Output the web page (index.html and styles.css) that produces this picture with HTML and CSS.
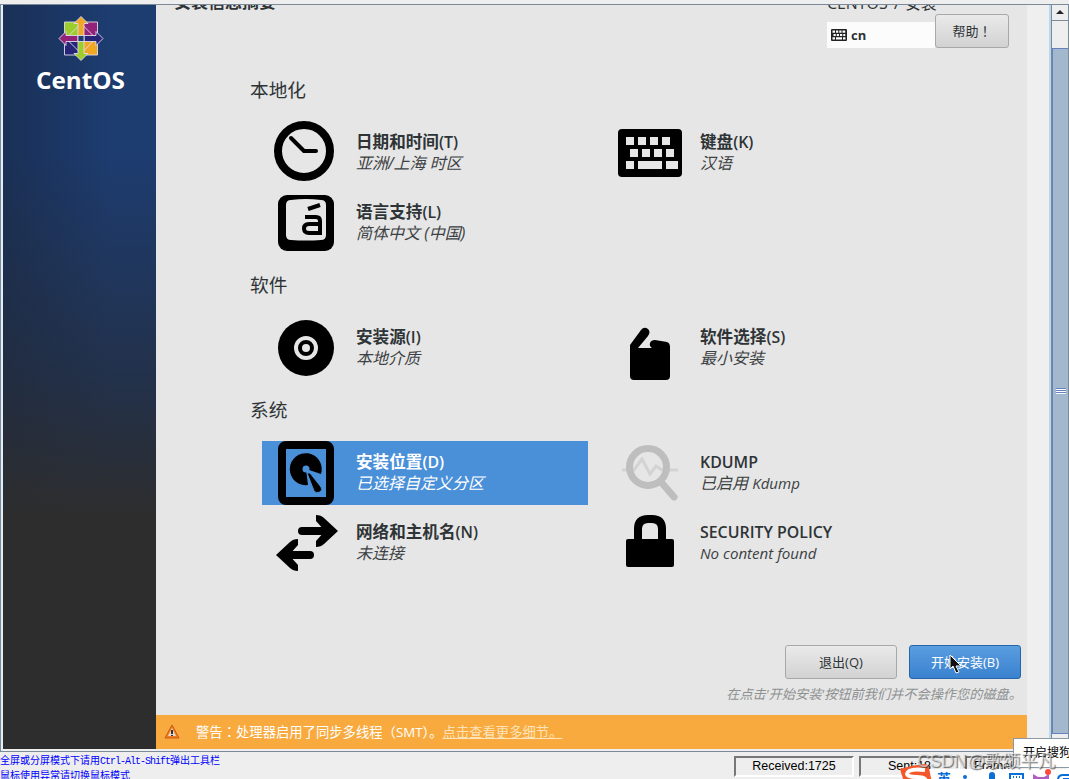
FILE: index.html
```html
<!DOCTYPE html>
<html lang="zh-CN">
  <head>
    <meta charset="UTF-8" />
    <meta name="viewport" content="width=device-width, initial-scale=1.0" />
    <title>CENTOS 7 安装</title>
    <link rel="stylesheet" href="styles.css">
  </head>
  <body>
    <div class="console">
      <div class="sidebar">
        <svg class="logo" width="100" height="84" viewBox="0 0 100 84">
          <g stroke="#e0dcea" stroke-width="0.9" transform="translate(22.5 0)">
            <path fill="#9ccd2a" d="M11 11h16v16H11z" />
            <path fill="#932279" d="M28 11h16v16H28z" />
            <path fill="#262577" d="M11 28h16v16H11z" />
            <path fill="#efa724" d="M28 28h16v16H28z" />
            <g transform="translate(27.5 27.5)">
              <path fill="none" d="M0-15L15 0L0 15L-15 0z" />
              <path fill="#efa724" d="M0-22l7 7h-4v12h-6v-12h-4z" />
              <path fill="#262577" d="M22 0l-7 7v-4H3v-6h12v-4z" />
              <path fill="#9ccd2a" d="M0 22l-7-7h4V3h6v12h4z" />
              <path fill="#932279" d="M-22 0l7-7v4h12v6h-12v4z" />
              <path fill="#1d3b6d" d="M-3-3h6v6h-6z" />
            </g>
          </g>
          <text x="5" y="78" textLength="89" lengthAdjust="spacingAndGlyphs">CentOS</text>
        </svg>
      </div>

      <div class="main">
        <div class="header">
          <div class="title">安装信息摘要</div>
          <div class="lang">
            <div class="product">CENTOS 7 安装</div>
            <div class="layout">
              <svg width="16" height="12" viewBox="0 0 64 48">
                <rect width="64" height="48" rx="4" fill="#222" />
                <path fill="#fcfcfc" d="M6 6h10v9H6zM20 6h9v9h-9zM33 6h9v9h-9zM46 6h11v9H46zM10 20h9v8h-9zM23 20h9v8h-9zM36 20h9v8h-9zM49 20h8v8h-8zM6 33h10v9H6zM20 33h24v9H20zM48 33h10v9H48z" />
              </svg>
              cn
            </div>
          </div>
          <div class="btn help">帮助<span class="mid" lang="zh-TW">！</span></div>
        </div>

        <div class="hub">
          <h2>本地化</h2>
          <div class="grid">
            <div class="spoke">
              <svg width="64" height="64">
                <circle cx="30" cy="30" r="26" fill="none" stroke="#000" stroke-width="8" />
                <path d="M17 17l13 13h12" fill="none" stroke="#000" stroke-width="4" stroke-linecap="round" stroke-linejoin="round" />
              </svg>
              <div class="text"><b>日期和时间<span>(T)</span></b><i>亚洲/上海 时区</i></div>
            </div>
            <div class="spoke">
              <svg width="64" height="64">
                <rect y="8" width="64" height="48" rx="4" />
                <path fill="#e6e6e6" d="M8 16h8v8H8zM20 16h8v8h-8zM32 16h8v8h-8zM44 16h8v8h-8zM12 28h8v8h-8zM24 28h8v8h-8zM36 28h8v8h-8zM48 28h8v8h-8zM8 40h8v8H8zM20 40h24v8H20zM48 40h12v8H48z" />
              </svg>
              <div class="text"><b>键盘<span>(K)</span></b><i>汉语</i></div>
            </div>
            <div class="spoke">
              <svg width="64" height="64">
                <rect x="4" y="4" width="56" height="56" rx="9" />
                <path fill="#e6e6e6" d="M17 9q15-2 30 0q5 0 5 5v30q0 5-5 5q-15 1-30 0q-5 0-5-5V14q0-5 5-5z" />
                <path d="M34 18l12-4" fill="none" stroke="#000" stroke-width="4" />
                <path d="M31 26h11q4 0 4 4v12H35q-5 0-5-4.500t5-4.500h11" fill="none" stroke="#000" stroke-width="4" />
              </svg>
              <div class="text"><b>语言支持<span>(L)</span></b><i>简体中文 (中国)</i></div>
            </div>
          </div>

          <h2>软件</h2>
          <div class="grid">
            <div class="spoke">
              <svg width="64" height="64">
                <circle cx="32" cy="32" r="28" />
                <circle cx="32" cy="32" r="10" fill="none" stroke="#e6e6e6" stroke-width="4" />
                <circle cx="32" cy="32" r="4" fill="#e6e6e6" />
              </svg>
              <div class="text"><b>安装源<span>(I)</span></b><i>本地介质</i></div>
            </div>
            <div class="spoke">
              <svg width="64" height="64">
                <path d="M12 29L23 14q3-4 7-1q3 3 0 7L20 32h14q-3-2-2-5q1-3 5-3l12 2q3 1 3 5v29q0 4-4 4H16q-4 0-4-4z" />
              </svg>
              <div class="text"><b>软件选择<span>(S)</span></b><i>最小安装</i></div>
            </div>
          </div>

          <h2>系统</h2>
          <div class="grid">
            <div class="spoke selected">
              <svg width="64" height="64">
                <rect x="8" y="4" width="48" height="56" rx="4" fill="none" stroke="#000" stroke-width="8" />
                <path d="M32 28l2 16A16 16 0 1 1 47 33z" />
                <circle cx="32" cy="28" r="3.500" fill="#4a90d9" />
                <path d="M33 32l3 0 11 14q2 3-1 5q-4 2-6-1z" stroke="#4a90d9" />
              </svg>
              <div class="text"><b>安装位置<span>(D)</span></b><i>已选择自定义分区</i></div>
            </div>
            <div class="spoke">
              <svg width="64" height="64">
                <path d="M4 29h12l8-11 8 15 6-8 6 4h16" fill="none" stroke="#d3d3d3" stroke-width="3" />
                <circle cx="30" cy="26" r="18.500" fill="none" stroke="#bebebe" stroke-width="7" />
                <path d="M43 41l13 15" stroke="#bebebe" stroke-width="7" stroke-linecap="round" />
              </svg>
              <div class="text"><b class="latin">KDUMP</b><i>已启用 <span>Kdump</span></i></div>
            </div>
            <div class="spoke">
              <svg width="64" height="64">
                <path d="M28 20h26M36 44H10" stroke="#000" stroke-width="8" stroke-linecap="round" />
                <path d="M42 4q5 0 8 3l14 13-14 13q-3 3-8 3v-6l9-10-9-10z" />
                <path d="M24 28q-5 0-8 3L2 44l14 13q3 3 8 3v-6l-9-10 9-10z" />
              </svg>
              <div class="text"><b>网络和主机名<span>(N)</span></b><i>未连接</i></div>
            </div>
            <div class="spoke">
              <svg width="64" height="64">
                <path d="M20 32V18q0-10 10-10h4q10 0 10 10v14" fill="none" stroke="#000" stroke-width="8" />
                <rect x="8" y="28" width="48" height="28" rx="2" />
              </svg>
              <div class="text"><b class="latin">SECURITY POLICY</b><i><span>No content found</span></i></div>
            </div>
          </div>
        </div>

        <div class="actions">
          <div class="btn">退出(Q)</div>
          <div class="btn primary">开始安装(B)
            <svg class="cursor" width="14" height="20" viewBox="0 0 14 20"><path d="M1 1v14l3-3 3 7 3-1-3-6h5z" fill="#111" stroke="#fff" /></svg>
          </div>
        </div>
        <div class="hint">在点击'开始安装'按钮前我们并不会操作您的磁盘。</div>

        <div class="warning">
          <svg width="16" height="16">
            <path d="M8 1l7 13H1z" fill="#f27c24" stroke="#c75b12" stroke-linejoin="round" />
            <path d="M8 4l4 8H4z" fill="#e8d9c6" />
            <path d="M7 6h2v4H7zM7 11h2v1H7z" fill="#333" />
          </svg>
          <span>警告<span class="mid" lang="zh-TW">：</span>处理器启用了同步多线程（SMT）。<u>点击查看更多细节。</u></span>
        </div>
      </div>

      <div class="scrollbar">
        <div class="up"></div>
        <div class="track"></div>
        <div class="thumb"><div class="grip"></div></div>
        <div class="end"></div>
      </div>
    </div>

    <div class="status">
      <div class="tips">
        <div>全屏或分屏模式下请用<span>Ctrl-Alt-Shift</span>弹出工具栏</div>
        <div>鼠标使用异常请切换鼠标模式</div>
      </div>
      <div class="field">Received:1725</div>
      <div class="field sent">Sent:18</div>
      <div class="field frame">Frame!</div>
    </div>

    <div class="tooltip">开启搜狗</div>
    <div class="ime">
      <svg width="169" height="19">
        <path d="M29 5h140v14H29z" fill="#fff" />
        <path d="M0 5Q12 1 25 0q3 0 4 4l3 15H5Q2 13 0 5z" fill="#f4582a" />
        <path d="M25 6Q8 4 7 10q0 3 10 3t9 6" fill="none" stroke="#fff" stroke-width="4" />
        <g fill="#0b6fd8">
          <circle cx="65" cy="13" r="2" />
          <rect x="89" y="8" width="6" height="12" rx="3" />
        </g>
        <path d="M110 20V10h13v10M113 13h1M116 13h1M119 13h1M113 17h1M116 17h1M119 17h1" fill="none" stroke="#0b6fd8" stroke-width="2" />
        <path d="M133 10l5 3h6l5-3v9h-16z" fill="#b35cc6" />
        <circle cx="148" cy="8" r="3" fill="#fb4a3e" />
        <path d="M158 20v-4q0-5 5-5h6M164 20v-5h5" fill="none" stroke="#0b6fd8" stroke-width="2" />
      </svg>
      <span>英</span>
    </div>
    <div class="watermark">CSDN @歌颂平凡</div>
  </body>
</html>
```
FILE: styles.css
```css
* {
  box-sizing: border-box;
}

body {
  margin: 0;
  width: 1069px;
  height: 779px;
  padding-top: 4px;
  overflow: hidden;
  position: relative;
  background-color: #eee;
  font-family: "Open Sans", "Noto Sans CJK SC", sans-serif;
  color: #2e3436;
}

svg {
  display: block;
  flex: none;
}

.console {
  display: flex;
  height: 748px;
  border: 1px solid #7a8a99;
  border-right: 0;
  padding: 0 0 2px 2px;
  background: linear-gradient(#efefef, #efefef) no-repeat 2px 0, #e4eef7;
}

.sidebar {
  width: 153px;
  background: linear-gradient(rgba(45, 45, 45, 0) 20%, rgba(38, 42, 50, 0.6) 50%, #2d2d2d 69%),
    linear-gradient(90deg, #1a3056, #1d3c70 70%);
}

.logo {
  margin: 6px 0 0 28px;
}
.logo text {
  font-family: "Open Sans", sans-serif;
  font-weight: 700;
  font-size: 23px;
  fill: #fff;
}

.main {
  display: flex;
  flex-direction: column;
  width: 871px;
  background-color: #e6e6e6;
}

.header {
  display: flex;
  height: 55px;
  padding-left: 18px;
  overflow: hidden;
}
.title {
  width: 653px;
  margin-top: -15px;
  font-size: 17px;
  line-height: 24px;
  font-weight: 700;
}
.lang {
  width: 108px;
}
.product {
  margin-top: -14px;
  height: 31px;
  font-size: 15.9px;
  line-height: 25px;
  white-space: nowrap;
}
.layout {
  display: flex;
  align-items: center;
  gap: 4px;
  height: 26px;
  padding: 0 0 1px 4px;
  background-color: #fcfcfc;
  font-size: 13px;
  font-weight: 700;
}

.btn {
  width: 112px;
  height: 34px;
  border: 1px solid #a8a8a8;
  border-radius: 3px;
  background: linear-gradient(#eaeaea, #d2d2d2);
  font-size: 13px;
  line-height: 32px;
  text-align: center;
}
.help {
  width: 74px;
  margin-top: 9px;
}
/* centred full-width punctuation */
.mid {
  font-family: "Noto Sans CJK TC", sans-serif;
  line-height: 1;
}
.primary {
  position: relative;
  border-color: #2566ab;
  background: linear-gradient(#5a9de0, #3a82d0);
  color: #fff;
}
.cursor {
  position: absolute;
  left: 39px;
  top: 8px;
}

.hub {
  height: 585px;
  padding: 17px 0 0 94px;
}
h2 {
  margin: 0;
  height: 26px;
  font-size: 18.7px;
  line-height: 26px;
  font-weight: 400;
}
.grid {
  display: grid;
  grid-template-columns: 326px 326px;
  gap: 6px 18px;
  padding: 18px 0 17px 12px;
}
.spoke {
  display: flex;
  height: 64px;
  padding-left: 12px;
}
.text {
  margin: 11px 0 0 18px;
  white-space: nowrap;
}
.text b,
.text i {
  display: block;
  height: 21px;
  line-height: 21px;
}
.text b {
  font-size: 16.6px;
  line-height: 20px;
}
.text b span,
.text .latin {
  font-size: 15.9px;
  font-weight: 600;
}
.text i {
  font-size: 16px;
  color: #3c4143;
}
.text i span {
  font-size: 15.1px;
}
.selected {
  background-color: #4a90d9;
}
.selected b,
.selected i {
  color: #fff;
}

.actions {
  display: flex;
  justify-content: flex-end;
  gap: 12px;
  padding-right: 6px;
}
.hint {
  height: 36px;
  padding-right: 5px;
  font-size: 13.2px;
  line-height: 30px;
  font-style: italic;
  text-align: right;
  color: #8e9192;
}

.warning {
  display: flex;
  flex: 1;
  align-items: center;
  gap: 16px;
  padding: 0 0 1px 8px;
  background-color: #f9aa3e;
  color: #fff;
  font-size: 13.33px;
}
.warning u {
  color: #fde3ba;
}

.scrollbar {
  display: flex;
  flex-direction: column;
  width: 18px;
  height: 746px;
  margin-left: auto;
  border: solid #7a8a99;
  border-width: 0 1px;
  box-shadow: -2px 0 0 #b8d8ee;
  background-color: #eee;
}
.up {
  height: 16px;
  border-bottom: 1px solid #7a8a99;
}
.up::before {
  content: "";
  display: block;
  width: 0;
  margin: 5px auto 0;
  border: solid transparent;
  border-width: 0 4px 4px;
  border-bottom-color: #222;
}
.track {
  height: 27px;
}
.thumb {
  display: flex;
  align-items: center;
  justify-content: center;
  height: 686px;
  border: 1px solid #6382bf;
  border-right: 0;
  background-color: #a3b8cc;
}
.grip {
  width: 10px;
  height: 6px;
  background: repeating-linear-gradient(#6382bf 0 1px, #fff 1px 2px);
}
.end {
  flex: 1;
  border-bottom: 1px solid #7a8a99;
}

.status {
  display: flex;
  height: 27px;
  font-family: "Liberation Sans", sans-serif;
  color: #000;
}
.tips {
  width: 734px;
  padding-top: 2px;
  font: 10px/12.5px "Noto Sans CJK SC", sans-serif;
  color: #00f;
}
.tips span {
  font-family: "Liberation Mono", monospace;
  letter-spacing: -1px;
}
.field {
  width: 120px;
  height: 21px;
  margin: 4px 5px 0 0;
  border: 2px solid;
  border-color: #777 #fff #fff #777;
  font-size: 12.5px;
  line-height: 17px;
  text-align: center;
}
.sent {
  width: 101px;
}
.frame {
  flex: 1;
  margin-right: 0;
  padding-left: 7px;
  text-align: left;
}

.tooltip {
  position: absolute;
  left: 1013px;
  top: 738px;
  width: 60px;
  height: 30px;
  padding-left: 9px;
  border: 1px solid #8b98a5;
  background-color: #fff;
  font-size: 12px;
  line-height: 28px;
  white-space: nowrap;
  color: #000;
}

.ime {
  position: absolute;
  left: 900px;
  top: 764px;
}
.ime span {
  position: absolute;
  left: 37px;
  top: 7px;
  font-size: 14px;
  line-height: 16px;
  font-weight: 700;
  color: #0b6fd8;
}

.watermark {
  position: absolute;
  left: 917px;
  top: 748px;
  font-family: "Liberation Sans", "Noto Sans CJK SC", sans-serif;
  font-size: 17.5px;
  line-height: 27px;
  word-spacing: -4px;
  white-space: nowrap;
  color: rgba(235, 235, 235, 0.65);
  text-shadow: 1px 1px 1px rgba(60, 60, 60, 0.75);
}
```
